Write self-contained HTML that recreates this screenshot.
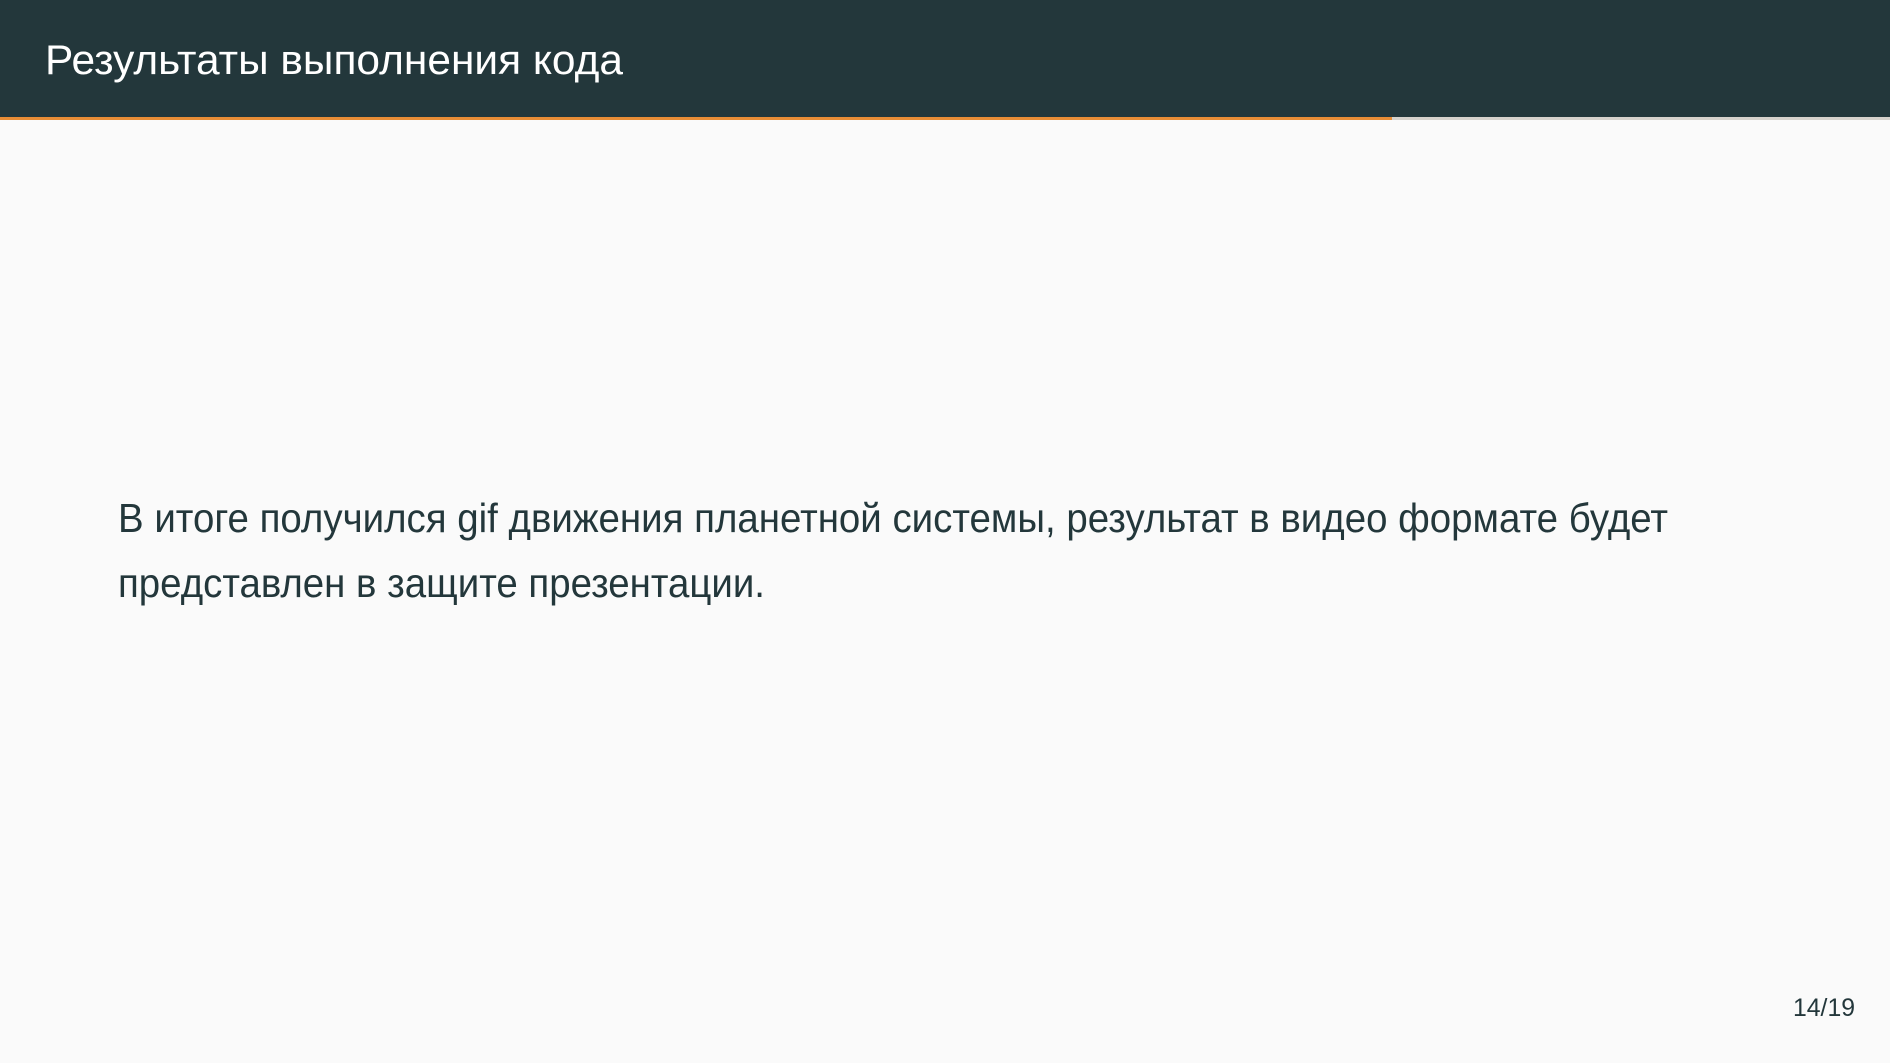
<!DOCTYPE html>
<html><head><meta charset="utf-8"><style>
html,body{margin:0;padding:0;background:#fafafa;}
svg{display:block}
</style></head><body>
<svg width="1890" height="1063" viewBox="0 0 1890 1063" xmlns="http://www.w3.org/2000/svg">
<rect width="1890" height="1063" fill="#fafafa"/>
<rect width="1890" height="117" fill="#23373b"/>
<rect x="0" y="117" width="1890" height="3" fill="#d6d2cc"/>
<rect x="0" y="117" width="1392" height="3" fill="#eb811b" opacity="0.85"/>
<g font-family="Liberation Sans, sans-serif">
<text x="45" y="74" font-size="42" fill="#ffffff" textLength="578" lengthAdjust="spacingAndGlyphs">Результаты выполнения кода</text>
<text x="118" y="532" font-size="41" fill="#23373b" textLength="1550" lengthAdjust="spacingAndGlyphs">В итоге получился gif движения планетной системы, результат в видео формате будет</text>
<text x="118" y="597" font-size="41" fill="#23373b" textLength="647" lengthAdjust="spacingAndGlyphs">представлен в защите презентации.</text>
<text x="1793" y="1016" font-size="25" fill="#23373b" textLength="62" lengthAdjust="spacingAndGlyphs">14/19</text>
</g>
</svg>
</body></html>
